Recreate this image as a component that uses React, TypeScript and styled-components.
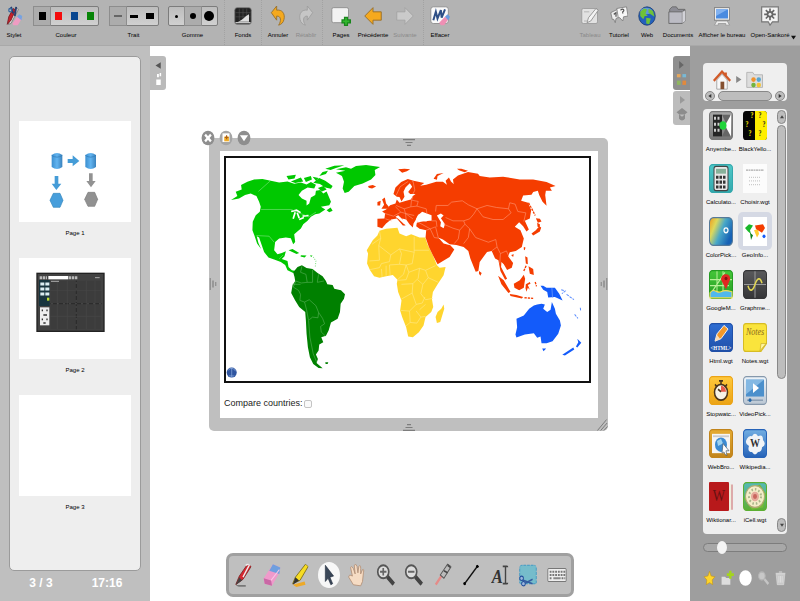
import React, { useState } from "react";
import styled, { createGlobalStyle, css } from "styled-components";

const GlobalStyle = createGlobalStyle`
  * { box-sizing: border-box; }
  body { margin: 0; background: #fff; }
  button { font: inherit; color: inherit; border: 0; padding: 0; background: none; cursor: pointer; }
  svg { display: block; }
`;

const font = `"Liberation Sans", Arial, sans-serif`;

const Shell = styled.div`
  min-height: 100vh;
  display: flex;
  flex-direction: column;
  font-family: ${font};
  font-size: 6px;
  line-height: 10px;
  color: #000;
`;

/* ---------- top bar ---------- */

const TopBar = styled.header`
  height: 46px;
  flex: none;
  display: flex;
  justify-content: space-between;
  background: #b3b3b3;
  border-bottom: 1px solid #a9a9a9;
  padding-right: 1px;
`;
const BarGroup = styled.div`
  display: flex;
`;
const itemLayout = css<{ $w: number }>`
  width: ${(p) => p.$w}px;
  padding-top: 6px;
  display: flex;
  flex-direction: column;
  align-items: center;
  gap: 4px;
  white-space: nowrap;
`;
const BarButton = styled.button<{ $w: number }>`
  ${itemLayout}
  justify-content: flex-start;
  &:disabled { color: #8a8a8a; cursor: default; }
`;
const BarField = styled.div<{ $w: number }>`
  ${itemLayout}
`;
const Separator = styled.span`
  width: 1px;
  margin: 0 2px;
  border-left: 1px dotted #a2a2a2;
`;
const Segments = styled.div`
  height: 20px;
  display: flex;
  border: 1px solid #7c7c7c;
  border-radius: 2px;
  background: linear-gradient(#bdbdbd, #d0d0d0);
`;
const Segment = styled.button<{ $on?: boolean }>`
  width: 16px;
  display: grid;
  place-items: center;
  background: ${(p) => (p.$on ? "#acacac" : "transparent")};
  box-shadow: ${(p) => (p.$on ? "0 0 0 1px #8d8d8d" : "none")};
`;
const Mark = styled.span<{ $w: number; $h: number; $c: string; $round?: boolean }>`
  width: ${(p) => p.$w}px;
  height: ${(p) => p.$h}px;
  background: ${(p) => p.$c};
  border-radius: ${(p) => (p.$round ? "50%" : "0")};
`;
const MoreButton = styled.button`
  width: 8px;
  padding-top: 30px;
`;

/* ---------- body ---------- */

const Body = styled.div`
  flex: 1;
  display: grid;
  grid-template-columns: 150px 1fr 110px;
`;
const PagesPanel = styled.aside`
  background: #bfbfbf;
  padding: 10px 9px 0;
  display: flex;
  flex-direction: column;
`;
const PageList = styled.div`
  flex: 1;
  background: #eee;
  border: 1px solid #9b9b9b;
  border-radius: 5px;
  padding-top: 64px;
  display: flex;
  flex-direction: column;
  align-items: center;
  gap: 20px;
`;
const PageEntry = styled.button`
  display: flex;
  flex-direction: column;
  align-items: center;
  gap: 6px;
`;
const Thumb = styled.span`
  display: block;
  width: 112px;
  height: 101px;
  background: #fff;
`;
const Status = styled.footer`
  height: 30px;
  padding-bottom: 6px;
  display: grid;
  grid-template-columns: 64px 1fr;
  align-items: center;
  justify-items: center;
  color: #fff;
  font: bold 12px ${font};
`;
const Board = styled.main`
  background: #fff;
  padding-top: 10px;
  display: flex;
  align-items: flex-start;
`;
const Tabs = styled.div`
  flex: none;
  display: flex;
  flex-direction: column;
  gap: 1px;
`;
const Tab = styled.button<{ $side: "left" | "right"; $bg: string }>`
  width: ${(p) => (p.$side === "left" ? 16 : 17)}px;
  height: 34px;
  display: grid;
  place-items: center;
  background: ${(p) => p.$bg};
  border-radius: ${(p) => (p.$side === "left" ? "0 3px 3px 0" : "3px 0 0 3px")};
`;
const Widget = styled.section`
  position: relative;
  flex: 1;
  margin: 82px 65px 0 43px;
  padding: 13px 10px 13px 11px;
  background: #bfbfbf;
  border-radius: 5px;
`;
const WidgetBody = styled.div`
  background: #fff;
  padding: 5px 7px 6px 4px;
`;
const MapFrame = styled.div`
  border: 2px solid #111;
`;
const CompareLabel = styled.label`
  display: flex;
  align-items: center;
  margin-top: 11px;
  height: 18px;
  font-size: 9px;
  line-height: 18px;
  color: #222;
`;
const Check = styled.input`
  appearance: none;
  width: 8px;
  height: 8px;
  margin: 2px 0 0 1px;
  border: 1px solid #c4c4c4;
  border-radius: 2px;
  background: #fafafa;
  &:checked { background: #777; }
`;
const WidgetControls = styled.div`
  position: absolute;
  top: -8px;
  left: -8px;
  display: flex;
  gap: 4px;
`;
const Grip = styled.span<{ $at: "top" | "bottom" | "left" | "right" | "corner" }>`
  position: absolute;
  ${(p) => p.$at === "top" && "top: 1px; left: 50%; transform: translateX(-50%) rotate(180deg);"}
  ${(p) => p.$at === "bottom" && "bottom: 0; left: 50%; transform: translateX(-50%);"}
  ${(p) => p.$at === "left" && "left: -2px; top: 50%; transform: translateY(-50%) rotate(90deg);"}
  ${(p) => p.$at === "right" && "right: -2px; top: 50%; transform: translateY(-50%) rotate(-90deg);"}
  ${(p) => p.$at === "corner" && "right: 0; bottom: 0;"}
`;

/* ---------- library ---------- */

const Library = styled.aside`
  background: #9e9e9e;
  padding: 17px 13px 0;
  display: flex;
  flex-direction: column;
`;
const Crumbs = styled.nav`
  height: 38px;
  background: #efefef;
  border-radius: 4px;
`;
const CrumbRow = styled.div`
  height: 28px;
  padding: 5px 0 0 10px;
  display: flex;
  align-items: center;
  gap: 4px;
`;
const HScroll = styled.div`
  height: 10px;
  padding: 0 2px;
  display: flex;
  gap: 3px;
`;
const ScrollPart = styled.button<{ $grow?: boolean; $vertical?: boolean }>`
  flex: ${(p) => (p.$grow ? "1" : "none")};
  width: ${(p) => (p.$vertical ? "9px" : "10px")};
  height: ${(p) => (p.$vertical ? "14px" : "10px")};
  display: grid;
  place-items: center;
  border: 1px solid #888;
  border-radius: 5px;
  background: #bdbdbd;
`;
const Shelf = styled.div`
  margin-top: 8px;
  display: flex;
  background: #efefef;
  border-radius: 4px;
`;
const Items = styled.div`
  flex: 1;
  padding: 0 5px 1px 1px;
  display: grid;
  grid-template-columns: minmax(0, 1fr) minmax(0, 1fr);
`;
const Item = styled.button`
  height: 53px;
  display: flex;
  flex-direction: column;
  align-items: center;
  gap: 3px;
  white-space: nowrap;
`;
const ItemIcon = styled.span<{ $on?: boolean }>`
  width: 28px;
  height: 32px;
  display: grid;
  place-items: center;
  border-radius: 2px;
  background: ${(p) => (p.$on ? "#d5d9e4" : "transparent")};
  box-shadow: ${(p) => (p.$on ? "0 0 0 3px #d5d9e4" : "none")};
`;
const VScroll = styled.div`
  width: 10px;
  padding: 1px 1px 2px 0;
  display: flex;
  flex-direction: column;
  gap: 1px;
`;
const ScrollThumb = styled.span`
  height: 254px;
  border: 1px solid #888;
  border-radius: 5px;
  background: #bdbdbd;
`;
const Spacer = styled.span`
  flex: 1;
`;
const SizeSlider = styled.input`
  appearance: none;
  width: 100%;
  height: 9px;
  margin: 9px 0 0;
  border: 1px solid #7d7d7d;
  border-radius: 5px;
  background: #a8a8a8;
  &::-webkit-slider-thumb {
    appearance: none;
    width: 10px;
    height: 13px;
    border-radius: 50%;
    background: #f4f4f4;
  }
`;
const LibraryActions = styled.div`
  margin-top: 18px;
  display: flex;
  justify-content: space-between;
`;

/* ---------- floating palette ---------- */

const Palette = styled.div`
  position: fixed;
  left: 50%;
  bottom: 4px;
  transform: translateX(-50%);
  width: 348px;
  height: 44px;
  display: flex;
  align-items: center;
  background: #bfbfbf;
  border: 3px solid #a0a0a0;
  border-radius: 7px;
`;
const Tool = styled.button<{ $on?: boolean }>`
  flex: 1;
  height: 28px;
  display: grid;
  place-items: center;
  svg { border-radius: 50%; background: ${(p) => (p.$on ? "#f7f7f7" : "transparent")}; }
`;

/* ---------- drawings ---------- */

type IconProps = { w?: number; h?: number; children: React.ReactNode };
const Icon = ({ w = 18, h = 20, children }: IconProps) => (
  <svg width={w} height={h} viewBox="0 0 24 24" preserveAspectRatio="none" aria-hidden="true">
    {children}
  </svg>
);

const undoPath = "M2 8 L10 0 V5 C18 4 23 9 21 16 C20 20 17 22 13 23 C17 18 17 12 10 12 V17Z";

const StyletIcon = () => (
  <Icon>
    <path d="M4 22 L14 2 L18 4 L8 21Z" fill="#d8d8d8" stroke="#777" />
    <path d="M3 22 L5 13 L11 3 L14 5 L8 17Z" fill="#c8202a" stroke="#741820" />
    <path d="M8 1 L11 9 M15 1 L13 12" stroke="#273e70" strokeWidth="2.4" />
    <circle cx="7" cy="5" r="2" fill="none" stroke="#3566a0" strokeWidth="1.6" />
    <path d="M10 21 L16 13 L23 14 L17 23 L11 23Z" fill="#ef9cc2" />
    <path d="M16 13 L19 10 L23 12 L22 17Z" fill="#77a4e0" />
  </Icon>
);
const FondsIcon = () => (
  <Icon>
    <rect x="1" y="2" width="22" height="20" rx="3" fill="#222" stroke="#777" />
    <path d="M2 8H22M2 13H22M7 3V17M12 3V17M17 3V17" stroke="#555" strokeWidth=".7" />
    <path d="M5 19 C10 18 14 13 20 10 V19Z" fill="#ddd" />
    <path d="M2 20H22" stroke="#ccc" strokeWidth="1.5" />
  </Icon>
);
const PagesIcon = () => (
  <Icon w={20}>
    <rect x="1" y="2" width="20" height="18" rx="2" fill="#f2f2f2" stroke="#888" />
    <path d="M18 13V24M12.5 18.5H24" stroke="#19861c" strokeWidth="5" />
    <path d="M18 14.5V22.5M14 18.5H22" stroke="#32b82f" strokeWidth="2" />
  </Icon>
);
const EffacerIcon = () => (
  <Icon w={20}>
    <rect x="1" y="1" width="21" height="20" rx="3" fill="#fafafa" stroke="#888" />
    <path d="M4 17 L7 7 L9 15 L13 5 L14 14 L18 4" fill="none" stroke="#2e4f86" strokeWidth="2.4" />
    <path d="M11 20 L18 13 L22 16 L17 23 H13Z" fill="#ee8fb4" />
    <path d="M18 13 L21 10 L24 13 L22 17Z" fill="#6a9de0" />
  </Icon>
);
const TableauIcon = () => (
  <Icon>
    <rect x="1" y="3" width="21" height="18" rx="2" fill="#e2e2e2" stroke="#969696" />
    <path d="M8 20 L10 14 L20 3 L23 5 L13 18Z" fill="#f3f3f3" stroke="#858585" />
    <path d="M4 7H11M4 18H8" stroke="#aaa" />
  </Icon>
);
const TutorielIcon = () => (
  <Icon>
    <path d="M1 8 L10 4 L13 13 L8 15 L7 20 L5 16 L3 16Z" fill="#ededed" stroke="#777" />
    <path d="M9 3 L22 1 L24 12 L18 13 L17 18 L13 14 L11 14Z" fill="#f7f7f7" stroke="#777" />
    <path d="M14 5 C18 2 20 6 17 7 V9 M5 10 L8 8 V13" fill="none" stroke="#555" strokeWidth="1.6" />
  </Icon>
);
const GlobeIcon = () => (
  <Icon>
    <circle cx="12" cy="12" r="11" fill="#2460bd" stroke="#183a70" />
    <ellipse cx="11" cy="6" rx="8" ry="4" fill="#8bbaf0" opacity=".6" />
    <path d="M3 7 L8 3 L12 4 L10 9 L13 12 L9 12 L7 16 L3 12Z M14 3 L20 6 L22 13 L17 10 L14 8Z M11 14 L17 15 L15 22 L11 21Z" fill="#6fc238" />
  </Icon>
);
const DocumentsIcon = () => (
  <Icon w={20}>
    <path d="M2 4 L5 1 H10 L12 4 H20 V8 H2Z" fill="#8d8d95" stroke="#666" />
    <path d="M1 21 V7 H17 L20 4 V18 L17 21Z" fill="#a3a3ab" stroke="#666" />
    <path d="M2 8H17V20H2Z" fill="#bcbcc4" />
    <path d="M17 7 L21 5 V18 L17 21Z" fill="#d2d2d8" stroke="#777" strokeWidth=".6" />
  </Icon>
);
const BureauIcon = () => (
  <Icon>
    <rect x="2" y="2" width="20" height="15" fill="#eee" stroke="#777" />
    <rect x="4" y="4" width="16" height="11" fill="#4a8be0" />
    <path d="M4 4H20L4 12Z" fill="#82b2f0" />
    <path d="M5 18H19L22 23H17V21H7V23H2Z" fill="#eee" stroke="#888" strokeWidth=".8" />
  </Icon>
);
const SankoreIcon = () => (
  <Icon w={20}>
    <path d="M2 1H22V19H15L12 23L10 19H2Z" fill="#f3f3f3" stroke="#777" strokeWidth="1.4" />
    <path d="M12 3V17M5 10H19M7 5L17 15M17 5L7 15" stroke="#666" strokeWidth="2" />
    <circle cx="12" cy="10" r="4" fill="#666" />
    <circle cx="12" cy="10" r="1.8" fill="#eee" />
  </Icon>
);

const trianglePaths = {
  right: "M4 0 L22 12 L4 24Z",
  left: "M20 0 L2 12 L20 24Z",
  up: "M0 20 L12 2 L24 20Z",
  down: "M0 4 L12 22 L24 4Z",
};
type TriangleProps = { dir?: keyof typeof trianglePaths; color?: string; s?: number };
const Triangle = ({ dir = "right", color = "#555", s = 6 }: TriangleProps) => (
  <Icon w={s} h={s}>
    <path fill={color} d={trianglePaths[dir]} />
  </Icon>
);

const FlowThumb = () => (
  <svg width="112" height="101" viewBox="0 0 336 303" aria-hidden="true">
    <defs>
      <linearGradient id="cyl">
        <stop offset="0" stopColor="#3b8fd0" />
        <stop offset=".5" stopColor="#62b4f0" />
        <stop offset="1" stopColor="#3a82bd" />
      </linearGradient>
    </defs>
    {[98, 199].map((x) => (
      <g key={x}>
        <path d={`M${x} 102 Q${x + 16} 90 ${x + 32} 102 V138 Q${x + 16} 150 ${x} 138Z`} fill="url(#cyl)" />
        <path d={`M${x} 103 Q${x + 16} 114 ${x + 32} 103`} fill="none" stroke="#2c77b5" strokeWidth="2" />
      </g>
    ))}
    <path d="M146 114H161V103L181 120L161 136V126H146Z" fill="#459cd7" />
    <path d="M107 165H118V188H127L112 207L98 188H107Z" fill="#459cd7" />
    <path d="M210 157H221V180H230L216 199L202 180H210Z" fill="#929292" />
    <path d="M93 238L103 217H123L132 238L123 259H103Z" fill="#479edb" stroke="#3386bd" strokeWidth="2" />
    <path d="M197 235L207 214H227L236 235L227 256H207Z" fill="#919191" stroke="#7b7b7b" strokeWidth="2" />
  </svg>
);
const GraphThumb = () => (
  <svg width="112" height="101" viewBox="0 0 336 303" aria-hidden="true">
    <rect x="54" y="46" width="201" height="174" fill="#424242" stroke="#222" strokeWidth="4" />
    <path d="M94 68H245V214H94Z" fill="#3c3c3c" />
    <path d="M94 137H248M172 68V214" stroke="#2a2a2a" strokeWidth="3" />
    <path d="M115 68V214M145 68V214M202 68V214M228 68V214M94 98H248M94 175H248" stroke="#474747" strokeWidth="2" />
    <path d="M98 137H246M172 74V210" stroke="#777" strokeWidth="4" strokeDasharray="2 16" />
    <rect x="88" y="54" width="60" height="10" fill="#fff" />
    <path d="M62 59H84M150 59H176" stroke="#bbb" strokeWidth="9" strokeDasharray="7 2" />
    <path d="M96 70H120M228 59H242" stroke="#aaa" strokeWidth="3" />
    <rect x="60" y="66" width="32" height="78" fill="#18353f" />
    <path d="M64 78H92M64 93H92M64 108H92" stroke="#dbeef2" strokeWidth="9" strokeDasharray="12 3" />
    <rect x="84" y="119" width="7" height="9" fill="#bedc31" />
    <rect x="63" y="148" width="28" height="54" fill="#eee" />
    <path d="M68 157H72M82 157H86M73 171H84M68 184H72M82 184H86M73 195H80" stroke="#333" strokeWidth="5" />
  </svg>
);

const WorldMap = () => (
  <svg width="100%" viewBox="21 24 1086 667" role="img" aria-label="World map">
    <g fill="#00c800">
      <path d="M36 150L55 138L50 125L68 118L66 105L85 95L105 88L130 87L155 92L180 97L205 94L225 101L245 97L262 103L275 96L290 104L285 115L265 112L248 122L238 135L248 145L262 152L262 166L270 160L275 142L288 135L290 122L303 120L312 130L322 124L335 155L330 165L305 170L318 178L300 190L288 192L275 200L265 212L252 222L245 235L225 252L228 275L222 282L215 264L200 262L180 265L168 275L165 300L175 312L188 308L200 303L196 318L188 326L205 332L208 350L218 360L230 362L222 368L205 360L198 344L185 335L165 328L148 322L135 305L128 285L120 262L113 258L118 278L126 296L114 280L106 256L100 240L101 215L110 195L122 185L125 170L120 155L112 138L95 130L78 135L60 145Z" />
      <path d="M350 58L380 52L395 56L410 48L440 45L482 51L466 60L468 75L455 88L430 100L405 108L388 125L376 129L370 115L374 95L368 78L350 68L378 62Z" />
      <path d="M202 78L230 74L226 85L208 88ZM215 94L245 82L252 94L228 99ZM254 84L275 78L278 88L260 96ZM280 80L298 84L290 92ZM282 98L300 84L318 92L340 108L335 116L318 112L302 102ZM300 78L310 66L326 62L320 72ZM296 114L312 108L322 118L308 124ZM318 56L345 47L375 46L350 54L334 60ZM322 180L334 172L340 182L330 186ZM208 300L220 296L240 308L232 311ZM245 315L262 316L256 322L244 319ZM272 316L280 316L276 320Z" />
    </g>
    <path d="M282 320L290 332L288 350" stroke="#7ee07e" strokeWidth="3" fill="none" strokeDasharray="3 4" />
    <path d="M216 184L232 180L244 188M228 186L222 206M234 188L240 204M240 208L254 202M250 198L268 196" stroke="#fff" strokeWidth="5" fill="none" />
    <g stroke="#9be89b" strokeWidth="1.5" fill="none">
      <path d="M118 124L154 92M126 178H216L244 190L268 200L290 186M112 256L150 258L165 276M180 326L192 314" />
    </g>

    <path fill="#008000" d="M222 366L235 350L248 345L262 353L280 356L295 368L310 378L320 392L324 402L340 404L345 415L365 420L377 432L374 445L364 460L362 485L355 505L335 516L328 540L320 556L306 560L312 575L300 582L298 600L290 612L296 625L292 637L310 653L298 652L282 640L272 620L266 590L262 550L260 510L258 485L240 470L228 450L216 428L220 405L228 392L226 380ZM318 635L327 635L325 640L319 640Z" />
    <path d="M248 348L244 366L260 372L264 396L246 398L230 392L222 410L238 420L244 432L242 450L256 455L262 478L268 510L272 560L282 610L292 634M280 358L280 396L264 396M298 372L294 396L314 392M256 455L270 448L290 466L298 486L296 502L280 500L270 508M298 486L310 504L316 520L304 528L306 545L318 556M220 402L244 402" stroke="#58b058" strokeWidth="1.8" fill="none" />

    <path fill="#ffd52e" d="M480 242L500 236L534 233L540 250L560 258L575 252L600 262L617 262L625 285L640 315L652 345L660 352L678 350L672 375L655 400L640 425L637 445L641 470L635 485L618 500L612 525L598 545L580 560L566 558L560 530L548 500L542 480L546 450L536 425L532 400L534 388L520 374L500 378L480 382L464 378L452 360L443 340L446 310L442 300L460 270L474 256ZM672 462L674 475L662 515L652 518L648 500L654 485L665 475Z" />
    <path d="M480 242L484 264L458 282M484 264L478 286L514 314L540 296L556 300L584 306V260M478 286L480 330L450 332M514 314L510 334L486 340L480 352L452 358M540 296L546 310L540 342L510 344L512 374M540 342L560 344L552 372L534 388M584 300H628M584 306L578 340L560 344L568 366L600 354L618 360L648 346M568 366L560 388L536 390M600 354L596 384L580 400L546 402M618 360L626 382L610 402L594 388M626 382L656 396M610 402L604 430L618 448L640 444M580 400L578 428L546 446M578 428L590 462L570 482L544 480M590 462L608 458L616 440M570 482L572 516L560 526M590 482L604 500L592 518L572 516M604 500L618 498M600 478L618 462M486 356L488 380M500 346L500 376" stroke="#ffe98c" strokeWidth="1.8" fill="none" />

    <g transform="translate(540 0)">
      <g fill="#f53d00">
        <path d="M-66 206L-45 205L-43 190L-52 184L-40 178L-28 165L-12 160L-8 148L0 158L20 152L34 148L40 138L48 132L32 132L26 126L38 110L30 98L42 92L74 99L62 107L80 104L110 95L130 95L142 104L138 92L148 82L154 94L162 102L160 88L175 76L205 66L235 71L240 78L270 82L310 80L360 88L400 88L440 96L467 108L450 112L456 122L438 122L436 135L440 167L428 155L418 135L414 122L400 126L395 134L370 136L364 152L385 158L394 180L390 205L375 212L387 238L380 244L370 228L358 216L345 230L362 240L372 265L366 290L348 302L330 306L325 318L340 338L336 352L322 359L312 342L305 335L304 350L322 385L316 388L302 362L296 330L286 325L276 302L262 305L240 335L236 362L228 364L212 325L206 302L192 290L170 284L150 282L130 268L116 262L132 280L152 285L164 298L150 320L114 342L100 315L88 290L78 262L80 240L60 236L50 228L52 218L75 212L96 212L96 195L82 190L68 185L55 195L48 210L42 220L40 232L30 222L20 208L8 205L18 226L10 226L-8 205L-25 208L-40 220L-52 234L-66 230Z" />
        <path d="M-18 132L-12 112L5 96L25 87L42 92L30 100L18 112L12 125L15 140L6 154L0 141L-8 140Z" />
        <path d="M-52 148L-44 142L-40 160L-32 170L-36 176L-54 176L-46 164ZM-66 156L-56 152L-58 166L-66 166ZM-94 108L-80 105L-70 109L-82 115L-92 113ZM-4 58L15 56L32 58L22 64L8 68ZM102 86L112 72L132 69L114 78L112 89ZM172 56L185 56L205 62L195 67L178 61ZM395 250L408 240L418 228L424 232L420 244L400 256ZM408 204L420 206L425 214L414 218ZM412 218L420 222L420 232L413 230ZM238 362L246 368L242 376L238 370ZM295 376L312 390L332 424L326 428L305 402ZM342 400L360 390L372 373L376 385L372 412L358 420L344 412ZM330 431L350 434L370 440L366 444L332 437ZM372 290L377 292L375 300L372 298ZM376 318L383 322L384 342L378 340ZM386 348L400 356L402 374L390 370ZM378 402L390 395L392 400L384 404L390 418L384 412L380 424L377 414ZM334 314L342 312L340 320Z" />
        <path d="M386 158L398 180L406 196M372 362L380 344M374 442L400 444M406 395L410 408" stroke="#f53d00" strokeWidth="4" fill="none" strokeDasharray="7 3" />
      </g>
      <path fill="#fff" d="M50 205L58 192L68 195L74 200L84 193L95 207L80 214L60 213ZM112 196L124 190L132 196L124 204L136 222L132 234L122 228L124 216ZM-2 207L-12 200L-4 195L12 210L20 224L14 222Z" />
      <path stroke="#ff9876" strokeWidth="1.8" fill="none" d="M108 184L110 166L145 166L156 156L188 152L206 164L232 176L222 192L210 206L192 212L160 212L138 202M232 176L262 166L290 172L326 176L330 158L346 162L354 184L378 188L372 214M232 176L250 200L280 208L310 208L334 188L326 176M132 222L160 234L180 240L196 222L192 212M180 240L176 266L164 280M196 222L210 236L206 262L192 280M210 236L228 262L266 276L288 268L292 290L276 302M292 290L302 310L320 302L328 320M302 310L300 340M54 215L92 236L108 230L116 262M80 240L92 236L104 262L118 264M96 212L110 212L112 230M40 140L36 150L56 154L52 168L80 176L82 190M36 150L34 170L52 168M34 170L14 176L-10 166M14 176L18 190L44 196M-44 190L-18 198L4 186L-12 170M4 186L18 190L20 208M18 190L40 206M40 92L46 120L40 132M-10 136L2 110L26 94M-42 206L-24 212" />
      <g fill="#135bfa">
        <path d="M422 406L430 406L440 412L465 412L478 430L488 450L465 440L445 441L442 425L430 418ZM350 505L372 495L388 475L402 465L412 462L425 460L435 462L430 475L442 485L452 478L456 455L465 475L468 490L480 510L483 525L475 550L458 572L440 578L425 578L422 558L412 562L402 548L375 552L350 561L347 552L352 530ZM427 594L439 594L431 602ZM487 613L520 591L523 597L495 615ZM528 588L535 575L532 565L544 577L532 591Z" />
      </g>
      <path d="M456 413L458 442" stroke="#79a3ff" strokeWidth="2" />
      <path d="M484 418L496 422L486 430M500 432L522 448M524 492L534 504M541 472L542 480" stroke="#5689ff" strokeWidth="3" strokeDasharray="8 3" fill="none" />
    </g>
    <circle cx="38" cy="666" r="15" fill="#2f55a0" />
    <path d="M27 660C34 650 44 652 50 662M30 676H46M38 652V681" stroke="#8faee0" strokeWidth="2" fill="none" />
  </svg>
);

const GripIcon = () => (
  <Icon w={12} h={7}>
    <path d="M8 2H16M5 12H19M0 22H24" stroke="#7d7d7d" strokeWidth="4" />
  </Icon>
);

const Tile = ({ a, b, edge, children }: { a: string; b: string; edge?: string; children: React.ReactNode }) => {
  const id = "t" + (a + b).replace(/#/g, "");
  return (
    <Icon w={24} h={29}>
      <defs>
        <linearGradient id={id} x2="0" y2="1">
          <stop stopColor={a} />
          <stop offset="1" stopColor={b} />
        </linearGradient>
      </defs>
      <rect x=".5" y=".5" width="23" height="23" rx="3" fill={`url(#${id})`} stroke={edge ?? b} />
      {children}
    </Icon>
  );
};

const glyph = { fontFamily: "Liberation Serif, serif", textAnchor: "middle" as const };

const library: { name: string; icon: React.ReactNode; on?: boolean }[] = [
  {
    name: "Anyembe...",
    icon: (
      <Tile a="#a8a8a8" b="#777777">
        <path d="M4 3H13V21H4Z" fill="#252525" />
        <path d="M5 6H12M5 11H12M5 16H12" stroke="#ccc" strokeDasharray="2 1.5" strokeWidth="2.5" />
        <path d="M13 3H21V21H13L18 12Z" fill="#666" />
        <path d="M22 3V21L16 12Z" fill="#fff" />
        <circle cx="14" cy="12" r="3.5" fill="#21d43a" />
      </Tile>
    ),
  },
  {
    name: "BlackYello...",
    icon: (
      <Icon w={24} h={29}>
        <rect width="24" height="24" rx="3" fill="#060606" />
        <path d="M12 0H21Q24 0 24 3V21Q24 24 21 24H12Z" fill="#ffee00" />
        <g fontSize="6" fontWeight="bold" style={glyph}>
          <g fill="#ffe800"><text x="9" y="6">?</text><text x="4" y="13">?</text><text x="7" y="21">?</text></g>
          <g fill="#222"><text x="17" y="6">?</text><text x="21" y="13">?</text><text x="17" y="21">?</text></g>
        </g>
      </Icon>
    ),
  },
  {
    name: "Calculato...",
    icon: (
      <Tile a="#4fc8c8" b="#33a8ad">
        <rect x="5" y="2" width="14" height="20" rx="2" fill="#e8e8e8" stroke="#444" />
        <rect x="7" y="4" width="10" height="4" fill="#87b19a" />
        <path d="M7 11H17M7 15H17M7 19H17" stroke="#333" strokeWidth="2.5" strokeDasharray="2.5 1" />
      </Tile>
    ),
  },
  {
    name: "Choisir.wgt",
    icon: (
      <Icon w={24} h={29}>
        <rect width="24" height="24" fill="#fcfcfc" />
        <path d="M3 5H21" stroke="#aaa" strokeDasharray="2 .5" />
        <path d="M6 11H18M6 14H17M6 17H18" stroke="#ccc" strokeDasharray="1 1" />
      </Icon>
    ),
  },
  {
    name: "ColorPick...",
    icon: (
      <Icon w={24} h={29}>
        <defs>
          <linearGradient id="spectrum" y2=".5">
            <stop stopColor="#f09a1c" />
            <stop offset=".3" stopColor="#ddd95b" />
            <stop offset=".6" stopColor="#49a8c8" />
            <stop offset="1" stopColor="#1762b5" />
          </linearGradient>
        </defs>
        <rect x=".5" y=".5" width="23" height="23" rx="4" fill="url(#spectrum)" stroke="#557a9a" />
        <circle cx="17" cy="11" r="2" fill="none" stroke="#fff" strokeWidth="1.2" />
      </Icon>
    ),
  },
  {
    name: "GeoInfo...",
    on: true,
    icon: (
      <Icon w={24} h={29}>
        <rect width="24" height="24" fill="#fff" />
        <path d="M2 9L6 6L10 7L7 11L8 14L5 12Z" fill="#1ab82b" />
        <path d="M7 13L10 15L8 19Z" fill="#087f1a" />
        <path d="M11 11L15 10L16 14L14 17Z" fill="#ffcd2e" />
        <path d="M12 7L20 6L22 9L19 13L13 10Z" fill="#f53d00" />
        <circle cx="21" cy="16" r="1.5" fill="#135bfa" />
      </Icon>
    ),
  },
  {
    name: "GoogleM...",
    icon: (
      <Tile a="#45c739" b="#249b22">
        <path d="M1 8H23M1 13H20M8 1V18M14 1V18M3 18L16 2" stroke="#b9f099" />
        <path d="M1 19C5 14 8 20 12 18S19 17 23 18V23H1Z" fill="#52b8ed" stroke="#f3df52" />
        <path d="M17 16L12 8C12 2 22 2 21 8Z" fill="#e02722" />
        <circle cx="17" cy="7" r="1.5" fill="#811" />
      </Tile>
    ),
  },
  {
    name: "Graphme...",
    icon: (
      <Tile a="#5a5a5c" b="#353537">
        <path d="M12 1V23M1 12H23" stroke="#999" />
        <path d="M5 13C7 19 10 17 12 12S17 5 19 11" fill="none" stroke="#e2d653" strokeWidth="1.5" />
      </Tile>
    ),
  },
  {
    name: "Html.wgt",
    icon: (
      <Tile a="#2e6dd3" b="#2050a8">
        <path d="M6 15L8 9L15 2L19 5L12 13Z" fill="#f39828" stroke="#fff" strokeWidth=".8" />
        <path d="M6 15L8 10L11 13Z" fill="#f8ddba" />
        <text x="12" y="22" fontSize="5" fontWeight="bold" fill="#fff" style={glyph}>&lt;HTML&gt;</text>
      </Tile>
    ),
  },
  {
    name: "Notes.wgt",
    icon: (
      <Icon w={24} h={29}>
        <path d="M3 .5H21Q23.500 .5 23.500 3V17L18 23.500H3Q.5 23.500 .5 21V3Q.5 .5 3 .5Z" fill="#fae43c" stroke="#d7bc23" />
        <path d="M17 23L18 17H23Z" fill="#fff6a0" stroke="#c8ac28" strokeWidth=".6" />
        <text x="12" y="10" fontSize="8" fontStyle="italic" fill="#8c6b1d" style={glyph}>Notes</text>
      </Icon>
    ),
  },
  {
    name: "Stopwatc...",
    icon: (
      <Tile a="#ffc93c" b="#eba315">
        <circle cx="12" cy="13.5" r="6.5" fill="#f7f3e7" stroke="#4b351b" strokeWidth="1.5" />
        <path d="M12 13L12 8A5 5 0 0 1 17 13Z" fill="#e75b4d" />
        <path d="M10 4H14M12 4V7M6 7L8 9M18 7L16 9M12 13L9 11" stroke="#4b351b" strokeWidth="1.5" />
      </Tile>
    ),
  },
  {
    name: "VideoPick...",
    icon: (
      <Tile a="#edf4fa" b="#bbc7d4" edge="#8598ac">
        <rect x="3" y="3" width="18" height="14" fill="#4c90cc" />
        <path d="M3 3H21L3 15Z" fill="#83b8e3" />
        <path d="M10 6L16 10L10 14Z" fill="#fff" />
        <path d="M4 20H20" stroke="#7c92aa" />
        <circle cx="7" cy="20" r="1.5" fill="#2367a8" />
      </Tile>
    ),
  },
  {
    name: "WebBro...",
    icon: (
      <Tile a="#e5ac33" b="#c1841b">
        <rect x="3" y="4" width="18" height="16" fill="#f5f5f5" />
        <path d="M4 6H20" stroke="#ccc" strokeWidth="1.5" />
        <circle cx="12" cy="13" r="6" fill="#3b8bd2" />
        <path d="M8 10L12 8L14 12L9 14Z" fill="#9dd2f0" />
        <path d="M14 12L20 18L17 18L18 22L16 21L15 19L13 20Z" fill="#fff" stroke="#456" strokeWidth=".6" />
      </Tile>
    ),
  },
  {
    name: "Wikipedia...",
    icon: (
      <Tile a="#72aee2" b="#2663b8">
        <path d="M6 14Q1 12 4 8Q6 5 9 6Q12 2 15 6Q20 4 20 9Q24 13 19 15Q19 19 15 19Q12 23 9 19Q4 19 6 14Z" fill="#f1f4f7" />
        <text x="12" y="15" fontSize="10" fontWeight="bold" fill="#333" style={glyph}>W</text>
      </Tile>
    ),
  },
  {
    name: "Wiktionar...",
    icon: (
      <Icon w={24} h={29}>
        <rect x="0" y="0" width="20" height="24" rx="1" fill="#b8191b" />
        <path d="M20 1L22 2V23L20 24Z" fill="#eed" />
        <path d="M23 2V23" stroke="#c66" />
        <text x="10" y="16" fontSize="13" fill="#611" style={glyph}>W</text>
      </Icon>
    ),
  },
  {
    name: "iCell.wgt",
    icon: (
      <Tile a="#54b9bb" b="#5caf32">
        <path d="M1 14L6 5L17 2L23 10L20 21L9 23Z" fill="#77ba38" />
        <ellipse cx="12" cy="12" rx="9.5" ry="9" fill="#f3edc8" stroke="#b0a975" />
        <circle cx="12" cy="12" r="6" fill="none" stroke="#a9b58a" strokeDasharray="1.5 2" strokeWidth="2" />
        <circle cx="12" cy="12" r="4" fill="#e5aa9c" />
        <circle cx="12" cy="12" r="2" fill="#c9665e" />
      </Tile>
    ),
  },
];

const zoomGlass = (sign: string) => (
  <>
    <path d="M14 14L21 21" stroke="#444" strokeWidth="4" strokeLinecap="round" />
    <circle cx="9" cy="9" r="6" fill="#ddd" stroke="#555" strokeWidth="1.8" />
    <path d={sign} stroke="#666" strokeWidth="1.8" />
  </>
);

const tools: { name: string; art: React.ReactNode }[] = [
  { name: "Pen", art: <><path d="M4 22H15" stroke="#777" strokeWidth="1.5" /><path d="M4 21L8 13L17 2L21 4L12 16Z" fill="#d62831" stroke="#722" strokeWidth=".8" /><path d="M15 3L20 1L12 14" fill="none" stroke="#eee" strokeWidth="1.5" /><path d="M4 21L8 14L11 17Z" fill="#444" /></> },
  { name: "Eraser", art: <><path d="M3 15L13 2L21 5L20 10L12 22L4 20Z" fill="#ef9acb" /><path d="M13 2L21 5L20 11L9 8Z" fill="#6e9fdf" /><path d="M3 15L11 17L12 22L4 20Z" fill="#c968a5" /><path d="M11 17L20 7" stroke="#f9c9e6" /></> },
  { name: "Highlighter", art: <><path d="M4 21L17 18L18 21L8 23Z" fill="#eda928" /><path d="M4 20L7 14L18 2L21 4L12 17Z" fill="#f6dc24" stroke="#77640b" strokeWidth=".8" /><path d="M4 21L7 14L11 17Z" fill="#333" /></> },
  { name: "Select", art: <path d="M8 3L17 13L13 14L16 20L14 21L11 15L8 18Z" fill="#394657" stroke="#222c3c" strokeWidth=".6" /> },
  { name: "Hand", art: <path d="M8 21L3 14Q3 11 7 13L5 5Q6 3 8 6L10 11L9 3Q11 1 12 4L13 10L14 4Q16 2 16 6V11L18 7Q20 6 19 10L18 18L16 22Z" fill="#f6dcc4" stroke="#b18d72" strokeWidth=".8" /> },
  { name: "Zoom in", art: zoomGlass("M5.5 9H12.5M9 5.5V12.5") },
  { name: "Zoom out", art: zoomGlass("M5.5 9H12.5") },
  { name: "Laser pointer", art: <><path d="M4 21L11 12" stroke="#e58b88" strokeWidth="2.5" /><path d="M9 12L17 2L21 4L13 15Z" fill="#bbb" stroke="#555" /><path d="M13 8L17 10M17 3L20 5" stroke="#444" strokeWidth="1.5" /></> },
  { name: "Line", art: <><path d="M5 20L19 4" stroke="#111" strokeWidth="1.5" /><circle cx="5" cy="20" r="1.5" /><circle cx="19" cy="4" r="1.5" /></> },
  { name: "Text", art: <><text x="9" y="19" fontSize="18" fontWeight="bold" fontStyle="italic" fill="#333" style={glyph}>A</text><path d="M15 4H21M15 20H21M18 4V20" stroke="#444" strokeWidth="1.5" /></> },
  { name: "Capture", art: <><rect x="3" y="3" width="18" height="17" fill="#76bccb" stroke="#4099c4" strokeDasharray="3 1" /><path d="M4 16L17 20M6 21L17 16" stroke="#355ca0" strokeWidth="1.5" /><circle cx="5" cy="15" r="2" fill="#9cb7dc" stroke="#244f9b" /><circle cx="7" cy="20" r="2" fill="#9cb7dc" stroke="#244f9b" /></> },
  { name: "Keyboard", art: <><rect x="2" y="6" width="20" height="12" rx="1" fill="#eee" stroke="#777" /><path d="M4 9H21M4 12H21M4 15H7M17 15H21" stroke="#777" strokeDasharray="2 1" strokeWidth="1.8" /><path d="M8 15H16" stroke="#888" strokeWidth="1.8" /></> },
];

export default function App() {
  const [tool, setTool] = useState("Select");
  return (
    <Shell>
      <GlobalStyle />
      <TopBar>
        <BarGroup>
          <BarButton $w={28}><StyletIcon />Stylet</BarButton>
          <BarField $w={76}>
            <Segments>
              {["#000", "#f40c0c", "#0a4790", "#078407"].map((c, i) => (
                <Segment key={c} $on={i === 0} aria-label={`Couleur ${i + 1}`}><Mark $w={7} $h={8} $c={c} /></Segment>
              ))}
            </Segments>
            Couleur
          </BarField>
          <BarField $w={59}>
            <Segments>
              {[2, 3, 6].map((h, i) => (
                <Segment key={h} $on={i === 0} aria-label={`Trait ${i + 1}`}><Mark $w={8} $h={h} $c={i ? "#000" : "#666"} /></Segment>
              ))}
            </Segments>
            Trait
          </BarField>
          <BarField $w={59}>
            <Segments>
              {[3, 6, 10].map((d, i) => (
                <Segment key={d} $on={i === 1} aria-label={`Gomme ${i + 1}`}><Mark $w={d} $h={d} $c="#000" $round /></Segment>
              ))}
            </Segments>
            Gomme
          </BarField>
          <Separator />
          <BarButton $w={32}><FondsIcon />Fonds</BarButton>
          <Separator />
          <BarButton $w={28}>
            <Icon w={16}><path d={undoPath} fill="#f5a91e" stroke="#99702b" strokeWidth="1.2" /></Icon>
            Annuler
          </BarButton>
          <BarButton $w={28} disabled>
            <Icon w={16}><g transform="matrix(-1 0 0 1 24 0)"><path d={undoPath} fill="#c6c6c6" stroke="#999" /></g></Icon>
            Rétablir
          </BarButton>
          <Separator />
          <BarButton $w={32}><PagesIcon />Pages</BarButton>
          <BarButton $w={32}>
            <Icon><path d="M1 12L12 2V7H23V17H12V22Z" fill="#f5a91e" stroke="#99702b" strokeWidth="1.2" /></Icon>
            Précédente
          </BarButton>
          <BarButton $w={32} disabled>
            <Icon><path d="M23 12L12 2V7H1V17H12V22Z" fill="#cacaca" stroke="#a0a0a0" /></Icon>
            Suivante
          </BarButton>
          <Separator />
          <BarButton $w={28}><EffacerIcon />Effacer</BarButton>
        </BarGroup>
        <BarGroup>
          <BarButton $w={30} disabled><TableauIcon />Tableau</BarButton>
          <BarButton $w={28}><TutorielIcon />Tutoriel</BarButton>
          <BarButton $w={28}><GlobeIcon />Web</BarButton>
          <BarButton $w={34}><DocumentsIcon />Documents</BarButton>
          <BarButton $w={54}><BureauIcon />Afficher le bureau</BarButton>
          <BarButton $w={42}><SankoreIcon />Open-Sankoré</BarButton>
          <MoreButton aria-label="Menu"><Triangle dir="down" color="#111" s={5} /></MoreButton>
        </BarGroup>
      </TopBar>

      <Body>
        <PagesPanel>
          <PageList>
            <PageEntry><Thumb><FlowThumb /></Thumb>Page 1</PageEntry>
            <PageEntry><Thumb><GraphThumb /></Thumb>Page 2</PageEntry>
            <PageEntry><Thumb />Page 3</PageEntry>
          </PageList>
          <Status><span>3 / 3</span><span>17:16</span></Status>
        </PagesPanel>

        <Board>
          <Tabs>
            <Tab $side="left" $bg="#bababa" aria-label="Pages panel">
              <Icon w={9} h={26}>
                <path d="M18 2V8L4 5Z" fill="#555" />
                <path d="M8 13H13V16H8ZM15 12H19V15H15ZM6 18H18V23H6Z" fill="#fff" />
              </Icon>
            </Tab>
          </Tabs>
          <Widget>
            <WidgetBody>
              <MapFrame><WorldMap /></MapFrame>
              <CompareLabel>Compare countries:<Check type="checkbox" /></CompareLabel>
            </WidgetBody>
            <Grip $at="top"><GripIcon /></Grip>
            <Grip $at="bottom"><GripIcon /></Grip>
            <Grip $at="left"><GripIcon /></Grip>
            <Grip $at="right"><GripIcon /></Grip>
            <Grip $at="corner">
              <Icon w={11} h={12}><path d="M1 23L21 1M8 23L22 8M15 23L23 15" stroke="#777" strokeWidth="2" /></Icon>
            </Grip>
            <WidgetControls>
              <button aria-label="Close">
                <Icon w={14} h={16}><circle cx="12" cy="12" r="11" fill="#8e8e8e" /><path d="M7 7L17 17M17 7L7 17" stroke="#fff" strokeWidth="4" /></Icon>
              </button>
              <button aria-label="Duplicate">
                <Icon w={14} h={16}><circle cx="12" cy="12" r="11" fill="#a5a5a5" /><rect x="6" y="5" width="12" height="13" fill="#fff" /><path d="M9 10H17V17H9Z" fill="#f0ad28" /><path d="M13 8V14M10 11H16" stroke="#b06010" strokeWidth="2" /></Icon>
              </button>
              <button aria-label="Menu">
                <Icon w={14} h={16}><circle cx="12" cy="12" r="11" fill="#8e8e8e" /><path d="M5 8H19L12 17Z" fill="#fff" /></Icon>
              </button>
            </WidgetControls>
          </Widget>
          <Tabs>
            <Tab $side="right" $bg="#8f8f8f" aria-label="Library">
              <Icon w={11} h={26}>
                <path d="M7 1V8L17 4.5Z" fill="#666" />
                <path d="M2 13H10V16H2Z" fill="#e5a75d" /><path d="M14 13H22V16H14Z" fill="#78b9d6" />
                <path d="M2 19H10V23H2Z" fill="#8fb65f" /><path d="M14 19H22V23H14Z" fill="#e1893d" />
              </Icon>
            </Tab>
            <Tab $side="right" $bg="#bcbcbc" aria-label="Teacher guide">
              <Icon w={12} h={26}>
                <path d="M8 1V8L18 4.5Z" fill="#999" />
                <path d="M1 16L12 12L23 16L12 20ZM6 18V22Q12 25 18 22V18" fill="#8c8c8c" />
              </Icon>
            </Tab>
          </Tabs>
        </Board>

        <Library>
          <Crumbs>
            <CrumbRow>
              <Icon w={18} h={20}>
                <path d="M5 12V23H19V12L12 5Z" fill="#f8f8f8" stroke="#999" />
                <path d="M1 13L12 2L23 13M17 3V7" fill="none" stroke="#d15a28" strokeWidth="3" />
                <rect x="10" y="14" width="5" height="9" fill="#855030" />
              </Icon>
              <Triangle color="#888" s={7} />
              <Icon w={18} h={19}>
                <path d="M1 22V3H9L11 6H22V22Z" fill="#ddd" stroke="#aaa" />
                <circle cx="10" cy="12" r="3" fill="#f0932d" /><circle cx="17" cy="12" r="3" fill="#57a6d0" />
                <circle cx="10" cy="19" r="3" fill="#72b43e" /><circle cx="17" cy="19" r="3" fill="#f4c434" />
              </Icon>
            </CrumbRow>
            <HScroll>
              <ScrollPart aria-label="Scroll left"><Triangle dir="left" s={4} color="#333" /></ScrollPart>
              <ScrollPart $grow aria-label="Scroll position" />
              <ScrollPart aria-label="Scroll right"><Triangle s={4} color="#333" /></ScrollPart>
            </HScroll>
          </Crumbs>
          <Shelf>
            <Items>
              {library.map((it) => (
                <Item key={it.name}><ItemIcon $on={it.on}>{it.icon}</ItemIcon>{it.name}</Item>
              ))}
            </Items>
            <VScroll>
              <ScrollPart $vertical aria-label="Scroll up"><Triangle dir="up" s={4} color="#444" /></ScrollPart>
              <ScrollThumb />
              <Spacer />
              <ScrollPart $vertical aria-label="Scroll down"><Triangle dir="down" s={4} color="#444" /></ScrollPart>
            </VScroll>
          </Shelf>
          <SizeSlider type="range" aria-label="Thumbnail size" defaultValue={18} />
          <LibraryActions>
            <button aria-label="Favourite">
              <Icon w={13} h={16}><path d="M12 2L15 9L22 10L17 15L18 22L12 19L6 22L7 15L2 10L9 9Z" fill="#ffd52b" stroke="#c29519" /></Icon>
            </button>
            <button aria-label="New folder">
              <Icon w={14} h={16}><path d="M1 10H7L9 12H16V22H1Z" fill="#ddd" /><path d="M16 1V13M10 7H22" stroke="#a4d51c" strokeWidth="4" /></Icon>
            </button>
            <button aria-label="Background">
              <Icon w={13} h={16}><circle cx="12" cy="12" r="11.5" fill="#fff" /></Icon>
            </button>
            <button aria-label="Search">
              <Icon w={13} h={16}><path d="M13 13L21 21" stroke="#c5c5c5" strokeWidth="4" /><circle cx="9" cy="9" r="6" fill="#c8c8c8" stroke="#b5b5b5" strokeWidth="2" /></Icon>
            </button>
            <button aria-label="Delete">
              <Icon w={13} h={16}><path d="M4 6H20L18 22H6Z" fill="#c9c9c9" stroke="#ddd" /><path d="M3 5H21M9 3H15M9 9V19M12 9V19M15 9V19" stroke="#dedede" strokeWidth="1.5" /></Icon>
            </button>
          </LibraryActions>
        </Library>
      </Body>

      <Palette role="toolbar" aria-label="Tools">
        {tools.map((t) => (
          <Tool key={t.name} $on={t.name === tool} aria-label={t.name} onClick={() => setTool(t.name)}>
            <Icon w={22} h={26}>{t.art}</Icon>
          </Tool>
        ))}
      </Palette>
    </Shell>
  );
}
